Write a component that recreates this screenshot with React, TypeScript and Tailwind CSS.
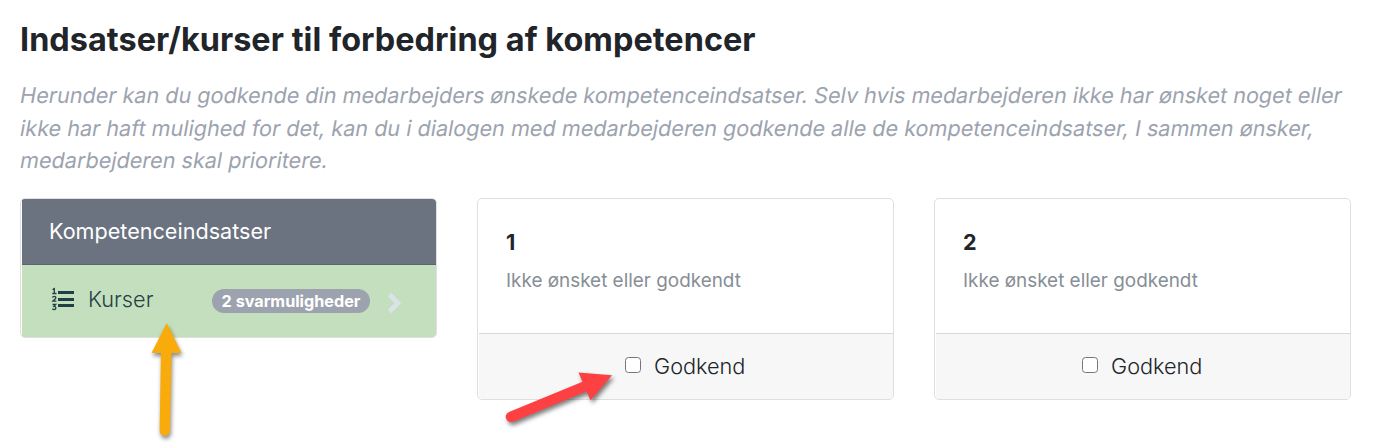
function NumberedListIcon() {
  return (
    <svg className="mb-[2px] h-6 w-6 shrink-0" viewBox="0 0 24 24" fill="none" stroke="#1f4145">
      <path strokeWidth="3" d="M7 5.500h16M7 12.500h16M7 18.500h16" />
      <path
        strokeWidth="1.3"
        d="M1.500 2.500 3.300 1.600V6.500M1.300 6.500h4.200M1.500 10.600c.3-1.600 3.400-1.700 3.400.1 0 1.200-2 2-3.100 3.400h3.600M1.500 17.500h3.200L3 19.400c2.400-.1 2.500 3.100.3 3.100-.9 0-1.600-.3-2-.9"
      />
    </svg>
  );
}

function CourseCard({ number }: { number: string }) {
  return (
    <section className="flex h-[202px] w-[417px] flex-col overflow-hidden rounded-[5px] border border-[#dfdfdf] bg-white pl-px">
      <div className="flex h-[134px] flex-col pl-[27px] pt-[30px]">
        <h2 className="text-[21.6px] leading-[26px] font-bold">{number}</h2>
        <p className="mt-3 text-[18.9px] leading-[28px] font-normal text-[#868e96]">Ikke ønsket eller godkendt</p>
      </div>
      <label className="flex flex-1 items-center border-t border-[#d7d7d7] bg-[#f7f7f7] pb-[2px] pl-[146px]">
        <input type="checkbox" className="mb-[2px] h-4 w-4 shrink-0 appearance-none rounded-[3.5px] border border-[#767676] bg-white" />
        <span className="ml-[13px] text-[21.7px] leading-[32px] font-[350]">Godkend</span>
      </label>
    </section>
  );
}

export default function App() {
  return (
    <main className="relative h-[447px] w-[1395px] overflow-hidden bg-white pl-5 pt-5 font-['Inter',sans-serif] text-[#212529]">
      <h1 className="text-[32.4px] leading-10 font-bold tracking-[0.045px] whitespace-nowrap">Indsatser/kurser til forbedring af kompetencer</h1>
      <p className="mt-[19.2px] text-[21.6px] leading-[32.4px] font-normal whitespace-nowrap text-[#9ca3af]">
        <span className="block w-max origin-[0_19px] -skew-x-10">
          Herunder kan du godkende din medarbejders ønskede kompetenceindsatser. Selv hvis medarbejderen ikke har ønsket noget eller
        </span>
        <span className="block w-max origin-[0_19px] -skew-x-10">
          ikke har haft mulighed for det, kan du i dialogen med medarbejderen godkende alle de kompetenceindsatser, I sammen ønsker,
        </span>
        <span className="block w-max origin-[0_19px] -skew-x-10">medarbejderen skal prioritere.</span>
      </p>
      <div className="mt-[21.8px] flex items-start gap-10">
        <section className="h-[140px] w-[417px] overflow-hidden rounded-[5px] border border-[#dfdfdf] pl-px">
          <h2 className="flex h-[66px] items-center border-b border-[#5b6471] bg-[#6b7280] pb-[2px] pl-[27px] text-[21.6px] font-normal text-white">Kompetenceindsatser</h2>
          <div className="flex h-[72px] items-center bg-[#c4dfbe] pb-[2px] pl-[29px] text-[#1f4145]">
            <NumberedListIcon />
            <span className="mb-[2px] ml-[13px] w-[67px] text-[21.7px] leading-8 font-[350]">Kurser</span>
            <span className="mt-[1px] ml-[57px] flex h-6 w-[158px] shrink-0 items-center justify-center rounded-full bg-[#9ca3af] text-[16.2px] font-bold whitespace-nowrap text-white">2 svarmuligheder</span>
            <svg className="mt-[5px] ml-[17px] h-[22px] w-4 shrink-0" viewBox="0 0 16 22" fill="none" stroke="#dce2ea" strokeWidth="4.6">
              <path d="m2.5 2.5 8.5 8.5-8.5 8.5" />
            </svg>
          </div>
        </section>
        <CourseCard number="1" />
        <CourseCard number="2" />
      </div>
      <svg className="absolute top-[315px] left-[140px] h-[132px] w-[60px] drop-shadow-[1px_3px_2px_rgba(0,0,0,0.45)]" viewBox="0 0 60 132" fill="#f8ab0a">
        <path d="M26.8 8 41.5 38H31.5L30 115.500a5.2 5.2 0 0 1-10.4 0L21 38h-9.500z" />
      </svg>
      <svg className="absolute top-[360px] left-[490px] h-20 w-32 drop-shadow-[2px_3px_2px_rgba(0,0,0,0.5)]" viewBox="0 0 128 80" fill="#fd4142">
        <path d="m122 15.200-21.500 25-4-9L23 61.700a5.200 5.200 0 0 1-4-9.800l73.500-30.200-4-9.200z" />
      </svg>
    </main>
  );
}
